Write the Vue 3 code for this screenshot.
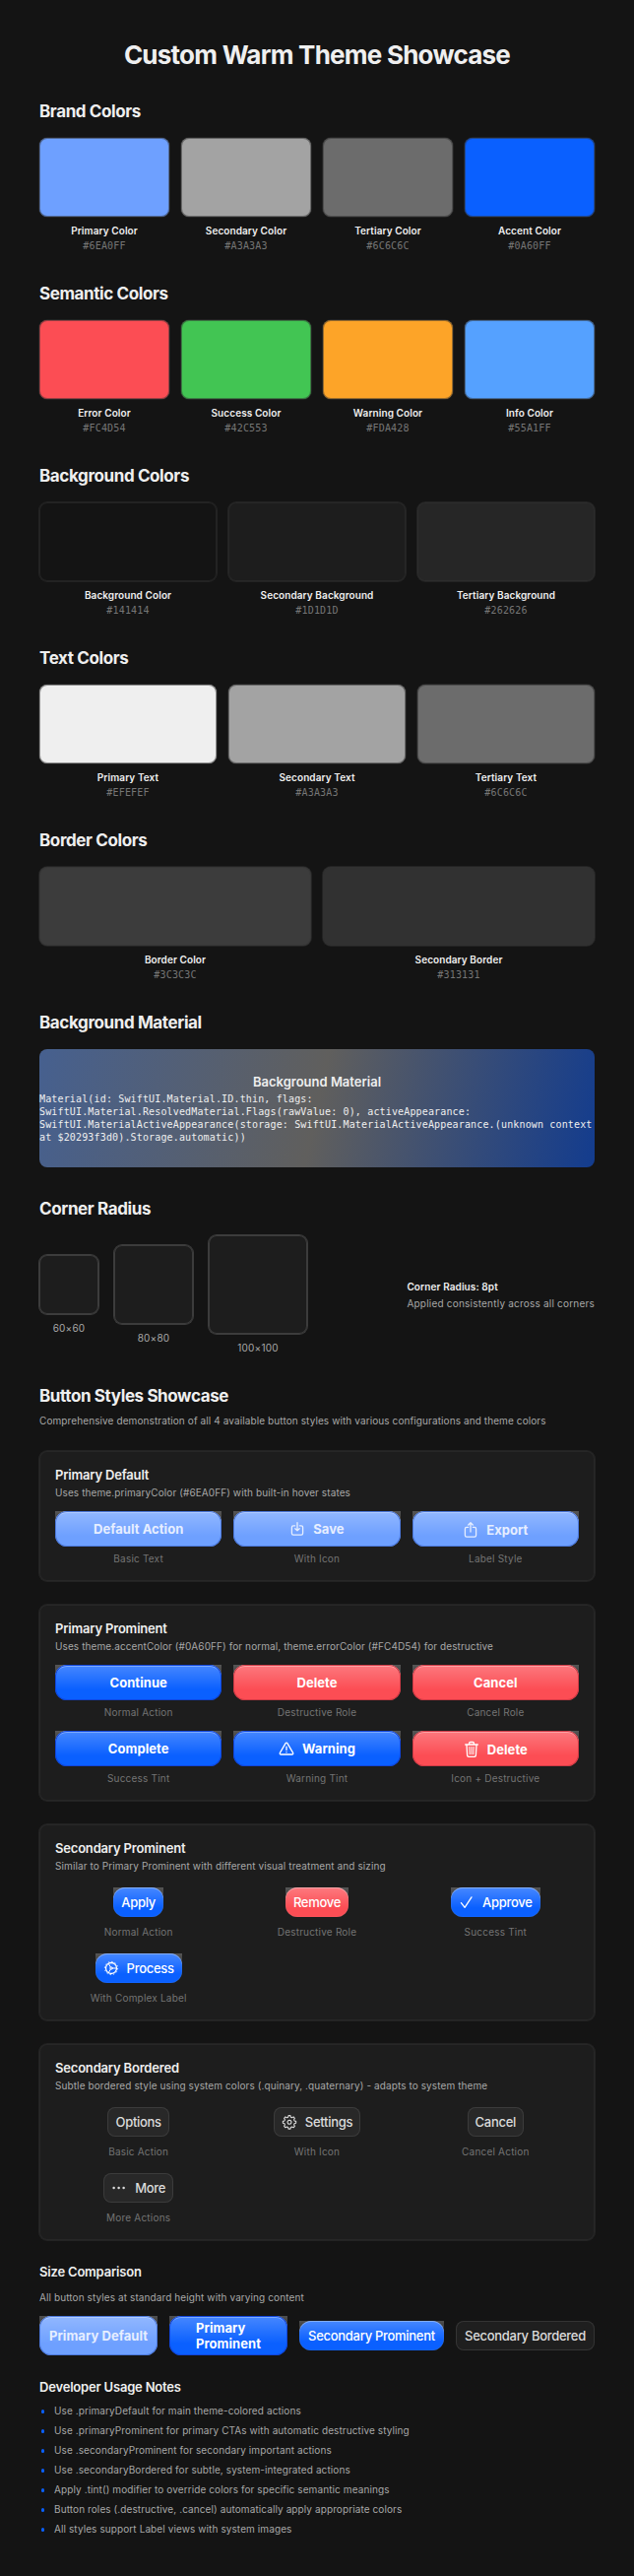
<script setup>
const swatchSections = [
  {
    title: 'Brand Colors',
    columns: 'four',
    items: [
      { name: 'Primary Color', hex: '#6EA0FF' },
      { name: 'Secondary Color', hex: '#A3A3A3' },
      { name: 'Tertiary Color', hex: '#6C6C6C' },
      { name: 'Accent Color', hex: '#0A60FF' },
    ],
  },
  {
    title: 'Semantic Colors',
    columns: 'four',
    items: [
      { name: 'Error Color', hex: '#FC4D54' },
      { name: 'Success Color', hex: '#42C553' },
      { name: 'Warning Color', hex: '#FDA428' },
      { name: 'Info Color', hex: '#55A1FF' },
    ],
  },
  {
    title: 'Background Colors',
    columns: 'three',
    items: [
      { name: 'Background Color', hex: '#141414' },
      { name: 'Secondary Background', hex: '#1D1D1D' },
      { name: 'Tertiary Background', hex: '#262626' },
    ],
  },
  {
    title: 'Text Colors',
    columns: 'three',
    items: [
      { name: 'Primary Text', hex: '#EFEFEF' },
      { name: 'Secondary Text', hex: '#A3A3A3' },
      { name: 'Tertiary Text', hex: '#6C6C6C' },
    ],
  },
  {
    title: 'Border Colors',
    columns: 'two',
    items: [
      { name: 'Border Color', hex: '#3C3C3C' },
      { name: 'Secondary Border', hex: '#313131' },
    ],
  },
]

const materialLines = [
  'Material(id: SwiftUI.Material.ID.thin, flags:',
  'SwiftUI.Material.ResolvedMaterial.Flags(rawValue: 0), activeAppearance:',
  'SwiftUI.MaterialActiveAppearance(storage: SwiftUI.MaterialActiveAppearance.(unknown context',
  'at $20293f3d0).Storage.automatic))',
]

const corners = [
  { size: 'small', label: '60×60' },
  { size: 'medium', label: '80×80' },
  { size: 'large', label: '100×100' },
]

const cards = [
  {
    title: 'Primary Default',
    text: 'Uses theme.primaryColor (#6EA0FF) with built-in hover states',
    buttons: [
      { text: 'Default Action', note: 'Basic Text', kind: 'primary soft' },
      { text: 'Save', note: 'With Icon', kind: 'primary soft', icon: 'save' },
      { text: 'Export', note: 'Label Style', kind: 'primary soft', icon: 'export', label: true },
    ],
  },
  {
    title: 'Primary Prominent',
    text: 'Uses theme.accentColor (#0A60FF) for normal, theme.errorColor (#FC4D54) for destructive',
    buttons: [
      { text: 'Continue', note: 'Normal Action', kind: 'primary accent' },
      { text: 'Delete', note: 'Destructive Role', kind: 'primary error' },
      { text: 'Cancel', note: 'Cancel Role', kind: 'primary error' },
      { text: 'Complete', note: 'Success Tint', kind: 'primary accent' },
      { text: 'Warning', note: 'Warning Tint', kind: 'primary accent', icon: 'warning' },
      { text: 'Delete', note: 'Icon + Destructive', kind: 'primary error', icon: 'trash', label: true },
    ],
  },
  {
    title: 'Secondary Prominent',
    text: 'Similar to Primary Prominent with different visual treatment and sizing',
    buttons: [
      { text: 'Apply', note: 'Normal Action', kind: 'secondary accent' },
      { text: 'Remove', note: 'Destructive Role', kind: 'secondary error' },
      { text: 'Approve', note: 'Success Tint', kind: 'secondary accent', icon: 'check' },
      { text: 'Process', note: 'With Complex Label', kind: 'secondary accent', icon: 'process' },
    ],
  },
  {
    title: 'Secondary Bordered',
    text: 'Subtle bordered style using system colors (.quinary, .quaternary) - adapts to system theme',
    buttons: [
      { text: 'Options', note: 'Basic Action', kind: 'bordered' },
      { text: 'Settings', note: 'With Icon', kind: 'bordered', icon: 'settings' },
      { text: 'Cancel', note: 'Cancel Action', kind: 'bordered' },
      { text: 'More', note: 'More Actions', kind: 'bordered', icon: 'more' },
    ],
  },
]

const notes = [
  'Use .primaryDefault for main theme-colored actions',
  'Use .primaryProminent for primary CTAs with automatic destructive styling',
  'Use .secondaryProminent for secondary important actions',
  'Use .secondaryBordered for subtle, system-integrated actions',
  'Apply .tint() modifier to override colors for specific semantic meanings',
  'Button roles (.destructive, .cancel) automatically apply appropriate colors',
  'All styles support Label views with system images',
]
</script>

<template>
  <main class="page">
    <h1>Custom Warm Theme Showcase</h1>

    <section v-for="section in swatchSections" :key="section.title">
      <h2>{{ section.title }}</h2>
      <div class="swatches" :class="section.columns">
        <div v-for="item in section.items" :key="item.name" class="swatch">
          <div class="chip" :style="{ backgroundColor: item.hex }"></div>
          <span class="name">{{ item.name }}</span>
          <span class="hex">{{ item.hex }}</span>
        </div>
      </div>
    </section>

    <section>
      <h2>Background Material</h2>
      <div class="material">
        <strong>Background Material</strong>
        <code><span v-for="line in materialLines" :key="line">{{ line }}</span></code>
      </div>
    </section>

    <section>
      <h2>Corner Radius</h2>
      <div class="corner-row">
        <div v-for="corner in corners" :key="corner.size" class="corner">
          <div class="box" :class="corner.size"></div>
          <span>{{ corner.label }}</span>
        </div>
        <div class="corner-info">
          <b>Corner Radius: 8pt</b>
          <span>Applied consistently across all corners</span>
        </div>
      </div>
    </section>

    <section class="buttons">
      <h2>Button Styles Showcase</h2>
      <p class="intro">Comprehensive demonstration of all 4 available button styles with various configurations and theme colors</p>

      <article v-for="card in cards" :key="card.title" class="card">
        <h3>{{ card.title }}</h3>
        <p>{{ card.text }}</p>
        <div class="grid">
          <div v-for="button in card.buttons" :key="button.note" class="cell">
            <div class="slot">
              <button class="btn" :class="button.kind">
                <span class="content" :class="{ label: button.label }">
                  <svg v-if="button.icon" class="icon" viewBox="0 0 16 18" fill="none" stroke="currentColor" stroke-width="1.3" stroke-linecap="round" stroke-linejoin="round">
                    <template v-if="button.icon === 'save'">
                      <path d="M5.6 5.8H4a1.6 1.6 0 0 0-1.6 1.6v6.2A1.6 1.6 0 0 0 4 15.2h8a1.6 1.6 0 0 0 1.6-1.6V7.4A1.6 1.6 0 0 0 12 5.8h-1.6M8 2.6v8.2M5.8 8.7 8 10.9l2.2-2.2" />
                    </template>
                    <template v-else-if="button.icon === 'export'">
                      <path d="M5.6 6.4H4A1.6 1.6 0 0 0 2.4 8v6.6A1.6 1.6 0 0 0 4 16.2h8a1.6 1.6 0 0 0 1.6-1.6V8A1.6 1.6 0 0 0 12 6.4h-1.6M8 11V1.900M5.7 4 8 1.7 10.3 4" />
                    </template>
                    <template v-else-if="button.icon === 'warning'">
                      <path d="M7.1 3.6 1.4 13.3A1.1 1.1 0 0 0 2.35 15h11.3a1.1 1.1 0 0 0 .95-1.7L8.9 3.6a1.05 1.05 0 0 0-1.8 0ZM8 7.2v3.4M8 12.7v.1" />
                    </template>
                    <template v-else-if="button.icon === 'trash'">
                      <path d="M1.7 4h12.6M5.6 3.9V2.6A1.1 1.1 0 0 1 6.7 1.5h2.6a1.1 1.1 0 0 1 1.1 1.1v1.3M3 4.2l.6 10.7a1.5 1.5 0 0 0 1.5 1.4h5.8a1.5 1.5 0 0 0 1.5-1.4L13 4.2" />
                      <path stroke-width="1" d="m5.9 6.5.2 7.3M8 6.5v7.3M10.1 6.5l-.2 7.3" />
                    </template>
                    <template v-else-if="button.icon === 'check'">
                      <path d="m2.4 9.700 3.700 4.600L13 3.900" />
                    </template>
                    <template v-else-if="button.icon === 'process'">
                      <circle cx="8" cy="9" r="5.5" />
                      <circle cx="8" cy="9" r="6.6" stroke-width="0.9" stroke-dasharray="1.4 2.056" stroke-linecap="butt" />
                      <circle cx="8" cy="9" r="1.2" stroke-width="1" />
                      <path stroke-width="1" d="M9.2 9h4.2M7.3 7.9 5.3 4.4M7.3 10.1l-2 3.500" />
                    </template>
                    <template v-else-if="button.icon === 'settings'">
                      <g transform="translate(.8 .8) scale(.9)">
                        <path stroke-width="1.2" d="M6.9 2h2.2l.5 1.9 1.200.5 1.700-1 1.500 1.600-.9 1.700.5 1.200 1.800.5v2.200l-1.800.5-.5 1.200.9 1.700-1.500 1.500-1.700-.9-1.200.5-.5 1.900H6.900l-.5-1.900-1.200-.5-1.700.9L2 14l.9-1.700-.5-1.200-1.800-.5V8.400l1.800-.5.500-1.200L2 5l1.500-1.600 1.700 1 1.200-.5Z" />
                        <circle cx="8" cy="9.5" r="2.2" stroke-width="1.2" />
                      </g>
                    </template>
                    <template v-else>
                      <g fill="currentColor" stroke="none">
                        <circle cx="2.6" cy="9" r="1.25" />
                        <circle cx="7.6" cy="9" r="1.25" />
                        <circle cx="12.6" cy="9" r="1.25" />
                      </g>
                    </template>
                  </svg>
                  <span>{{ button.text }}</span>
                </span>
              </button>
            </div>
            <span class="note">{{ button.note }}</span>
          </div>
        </div>
      </article>

      <div class="compare">
        <h3>Size Comparison</h3>
        <p>All button styles at standard height with varying content</p>
        <div class="compare-row">
          <button class="btn primary soft tall"><span class="content">Primary Default</span></button>
          <button class="btn primary accent tall"><span class="content two-line">Primary<br>Prominent</span></button>
          <button class="btn secondary accent grow-a"><span class="content">Secondary Prominent</span></button>
          <button class="btn bordered dim grow-b"><span class="content">Secondary Bordered</span></button>
        </div>
      </div>

      <div class="usage">
        <h3>Developer Usage Notes</h3>
        <ul>
          <li v-for="note in notes" :key="note">{{ note }}</li>
        </ul>
      </div>
    </section>
  </main>
</template>

<style>
html,
body {
  margin: 0;
  background: #141414;
}
</style>

<style scoped>
.page {
  box-sizing: border-box;
  width: 644px;
  min-height: 2615px;
  padding: 40px;
  display: flex;
  flex-direction: column;
  gap: 32px;
  background: #141414;
  color: #efefef;
  font-family: Inter, "Liberation Sans", sans-serif;
  font-size: 10px;
  line-height: 13px;
  letter-spacing: 0.1px;
}

h1,
h2,
h3,
p,
ul {
  margin: 0;
  padding: 0;
}

h1 {
  font-size: 26px;
  font-weight: 700;
  line-height: 31px;
  letter-spacing: -0.76px;
  text-align: center;
}

h2 {
  margin-bottom: 16px;
  font-size: 17px;
  font-weight: 700;
  line-height: 21px;
  letter-spacing: -0.39px;
}

h3 {
  font-size: 13px;
  font-weight: 600;
  line-height: 16px;
  letter-spacing: -0.19px;
}

p {
  color: #a8a8a8;
  white-space: nowrap;
}

.swatches {
  display: grid;
  gap: 12px;
}

.four {
  grid-template-columns: repeat(4, 1fr);
}

.three {
  grid-template-columns: repeat(3, 1fr);
}

.two {
  grid-template-columns: repeat(2, 1fr);
}

.swatch {
  display: flex;
  flex-direction: column;
  align-items: center;
}

.chip {
  align-self: stretch;
  height: 80px;
  margin-bottom: 8px;
  border-radius: 8px;
  box-shadow: 0 0 0 1px rgba(49, 49, 49, 0.5), inset 0 0 0 1px rgba(49, 49, 49, 0.5);
}

.name {
  margin-bottom: 2px;
  font-weight: 600;
  letter-spacing: 0.085px;
}

.hex {
  color: #767676;
  font-family: "DejaVu Sans Mono", "Liberation Mono", monospace;
  letter-spacing: 0.16px;
}

.material {
  height: 120px;
  display: flex;
  flex-direction: column;
  align-items: center;
  justify-content: center;
  gap: 3px;
  border-radius: 8px;
  background: linear-gradient(102deg, #46608f, #605f5d 50%, #133c8e);
}

.material strong {
  font-size: 13px;
  font-weight: 600;
  line-height: 16px;
  letter-spacing: 0;
}

.material code {
  align-self: stretch;
  display: flex;
  flex-direction: column;
  font-family: "DejaVu Sans Mono", "Liberation Mono", monospace;
  letter-spacing: 0.15px;
  white-space: pre;
}

.corner-row {
  display: flex;
  align-items: center;
  gap: 16px;
}

.corner {
  display: flex;
  flex-direction: column;
  align-items: center;
  gap: 8px;
  color: #a8a8a8;
  letter-spacing: 0.2px;
}

.box {
  border-radius: 8px;
  background: #1d1d1d;
  box-shadow: 0 0 0 1px #3c3c3c, inset 0 0 0 1px #3c3c3c;
}

.small {
  width: 60px;
  height: 60px;
}

.medium {
  width: 80px;
  height: 80px;
}

.large {
  width: 100px;
  height: 100px;
}

.corner-info {
  margin-left: auto;
  display: flex;
  flex-direction: column;
  gap: 4px;
  color: #a8a8a8;
  letter-spacing: 0.21px;
}

.corner-info b {
  color: #efefef;
  font-weight: 600;
  letter-spacing: 0.1px;
}

.buttons {
  display: flex;
  flex-direction: column;
  gap: 24px;
}

.buttons h2 {
  margin-bottom: -16px;
}

.card {
  display: flex;
  flex-direction: column;
  padding: 16px;
  border-radius: 8px;
  background: #1d1d1d;
  box-shadow: 0 0 0 1px rgba(49, 49, 49, 0.5), inset 0 0 0 1px rgba(49, 49, 49, 0.5);
}

.card h3 {
  margin-bottom: 4px;
}

.grid {
  margin-top: 12px;
  display: grid;
  grid-template-columns: repeat(3, 1fr);
  gap: 12px;
}

.cell {
  display: flex;
  flex-direction: column;
  align-items: center;
  gap: 6px;
}

.slot {
  align-self: stretch;
  height: 36px;
  display: flex;
  align-items: center;
  justify-content: center;
}

.note {
  color: #747474;
  letter-spacing: 0.2px;
}

.btn {
  position: relative;
  box-sizing: border-box;
  height: 30px;
  padding: 0 8px;
  border: 0;
  background: none;
  color: #fff;
  font: 500 13px/16px Inter, "Liberation Sans", sans-serif;
  letter-spacing: -0.29px;
  white-space: nowrap;
  isolation: isolate;
}

.btn::before,
.btn::after {
  content: "";
  position: absolute;
  inset: 0;
  z-index: -1;
  border-radius: 12px;
}

.primary,
.secondary {
  background: linear-gradient(rgba(255, 255, 255, 0.25), rgba(255, 255, 255, 0) 70%);
}

.primary {
  width: 100%;
  height: 36px;
  font-weight: 700;
  letter-spacing: 0.05px;
}

.primary::before,
.secondary::before {
  background: linear-gradient(rgba(255, 255, 255, 0.25), rgba(255, 255, 255, 0) 70%) var(--tint);
}

.primary::after {
  box-shadow: inset 0 0 0 1px var(--edge), inset 0 2px 0.5px rgba(255, 255, 255, 0.3);
}

.secondary::after {
  box-shadow: inset 0 1px 0.5px rgba(255, 255, 255, 0.3), inset 0 0 1px rgba(255, 255, 255, 0.3);
}

.soft {
  --tint: #6ea0ff;
  --edge: #4b78dc;
  color: #e6eeff;
}

.accent {
  --tint: #0a60ff;
  --edge: #1045dc;
}

.error {
  --tint: #fc4d54;
  --edge: #cf3a45;
}

.bordered {
  color: #dcdcdc;
}

.bordered::before {
  background: #282828;
  border-radius: 8px;
  box-shadow: inset 0 0 0 1px #3b3b3b;
}

.bordered.dim::before {
  background: #1f1f1f;
  box-shadow: inset 0 0 0 1px #343434;
}

.content {
  display: inline-flex;
  align-items: center;
  gap: 8px;
  vertical-align: top;
}

.label {
  padding-top: 2px;
}

.label .icon {
  margin-top: -2px;
}

.icon {
  flex: none;
  width: 16px;
  height: 18px;
  margin: -1px 0;
}

.compare,
.usage {
  display: flex;
  flex-direction: column;
  gap: 12px;
}

.compare-row {
  height: 40px;
  display: flex;
  align-items: center;
  gap: 12px;
}

.tall {
  flex: none;
  width: 120px;
  height: 40px;
}

.two-line {
  text-align: left;
}

.grow-a {
  flex: none;
  width: 147px;
}

.grow-b {
  flex: none;
  width: 141px;
}

.usage {
  gap: 10px;
}

ul {
  list-style: none;
  display: flex;
  flex-direction: column;
  gap: 7px;
}

li {
  display: flex;
  align-items: center;
  gap: 10px;
  padding-left: 1.5px;
  color: #a8a8a8;
}

li::before {
  content: "";
  width: 3.5px;
  height: 3.5px;
  margin-top: 1px;
  border-radius: 50%;
  background: #0a60ff;
}
</style>
